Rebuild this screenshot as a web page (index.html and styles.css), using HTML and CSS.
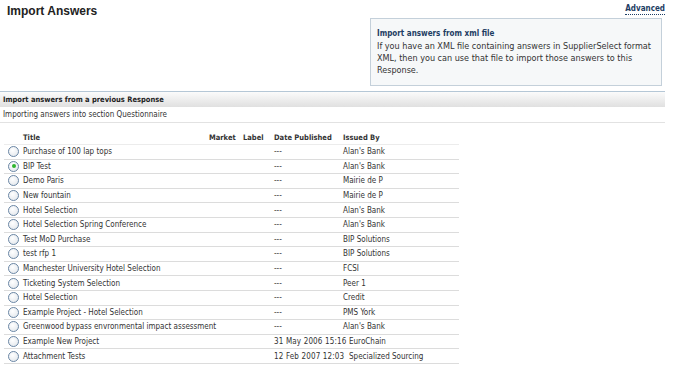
FILE: index.html
```html
<!DOCTYPE html>
<html lang="en">
  <head>
    <meta charset="UTF-8" />
    <title>Import Answers</title>
    <link rel="stylesheet" href="styles.css">
  </head>
  <body>
    <header class="top">
      <h1>Import Answers</h1>
      <div class="side">
        <a class="advanced" href="#">Advanced</a>
        <div class="info">
          <h3>Import answers from xml file</h3>
          <p>
            If you have an XML file containing answers in SupplierSelect format
            XML, then you can use that file to import those answers to this
            Response.
          </p>
        </div>
      </div>
    </header>
    <section class="previous">
      <h2 class="bar">Import answers from a previous Response</h2>
      <p class="note">Importing answers into section Questionnaire</p>
      <table class="responses">
        <colgroup>
          <col class="c-radio" />
          <col class="c-title" />
          <col class="c-market" />
          <col class="c-label" />
          <col class="c-date" />
          <col class="c-issued" />
        </colgroup>
        <thead>
          <tr>
            <th></th>
            <th>Title</th>
            <th>Market</th>
            <th>Label</th>
            <th>Date Published</th>
            <th>Issued By</th>
          </tr>
        </thead>
        <tbody>
          <tr><td><span class="radio"></span></td><td>Purchase of 100 lap tops</td><td></td><td></td><td>---</td><td>Alan's Bank</td></tr>
          <tr><td><span class="radio checked"></span></td><td>BIP Test</td><td></td><td></td><td>---</td><td>Alan's Bank</td></tr>
          <tr><td><span class="radio"></span></td><td>Demo Paris</td><td></td><td></td><td>---</td><td>Mairie de P</td></tr>
          <tr><td><span class="radio"></span></td><td>New fountain</td><td></td><td></td><td>---</td><td>Mairie de P</td></tr>
          <tr><td><span class="radio"></span></td><td>Hotel Selection</td><td></td><td></td><td>---</td><td>Alan's Bank</td></tr>
          <tr><td><span class="radio"></span></td><td>Hotel Selection Spring Conference</td><td></td><td></td><td>---</td><td>Alan's Bank</td></tr>
          <tr><td><span class="radio"></span></td><td>Test MoD Purchase</td><td></td><td></td><td>---</td><td>BIP Solutions</td></tr>
          <tr><td><span class="radio"></span></td><td>test rfp 1</td><td></td><td></td><td>---</td><td>BIP Solutions</td></tr>
          <tr><td><span class="radio"></span></td><td>Manchester University Hotel Selection</td><td></td><td></td><td>---</td><td>FCSI</td></tr>
          <tr><td><span class="radio"></span></td><td>Ticketing System Selection</td><td></td><td></td><td>---</td><td>Peer 1</td></tr>
          <tr><td><span class="radio"></span></td><td>Hotel Selection</td><td></td><td></td><td>---</td><td>Credit</td></tr>
          <tr><td><span class="radio"></span></td><td>Example Project - Hotel Selection</td><td></td><td></td><td>---</td><td>PMS York</td></tr>
          <tr><td><span class="radio"></span></td><td>Greenwood bypass envronmental impact assessment</td><td></td><td></td><td>---</td><td>Alan's Bank</td></tr>
          <tr><td><span class="radio"></span></td><td>Example New Project</td><td></td><td></td><td class="dated">31 May 2006 15:16</td><td class="after-date">EuroChain</td></tr>
          <tr><td><span class="radio"></span></td><td>Attachment Tests</td><td></td><td></td><td class="dated">12 Feb 2007 12:03</td><td class="after-date">Specialized Sourcing</td></tr>
        </tbody>
      </table>
    </section>
  </body>
</html>
```

FILE: styles.css
```css
body {
  margin: 0;
  font-family: "DejaVu Sans Condensed", "Liberation Sans", sans-serif;
  font-size: 8px;
  color: #333333;
  background: #ffffff;
}

.top {
  display: flex;
  justify-content: space-between;
  padding: 4px 8px 0 7px;
  box-sizing: border-box;
  width: 673px;
}

h1 {
  margin: 0;
  font: bold 12px "Liberation Sans", sans-serif;
  color: #222222;
}

.side {
  width: 295px;
  display: flex;
  flex-direction: column;
  align-items: flex-end;
}

.advanced {
  font-size: 8px;
  font-weight: bold;
  color: #1d3d63;
  text-decoration: none;
  border-bottom: 1px dotted #1d3d63;
  line-height: 10px;
}

.info {
  width: 292px;
  margin: 3px 3px 0 0;
  padding: 9px 6px 9px;
  box-sizing: border-box;
  border: 1px solid #c4d0da;
  background: #f6f8f9;
  font-size: 9px;
  line-height: 12px;
}

.info h3 {
  margin: 0;
  font-size: 8px;
  color: #1d3d63;
}

.info p {
  margin: 0;
  color: #333333;
}

.bar {
  margin: 5px 0 0;
  width: 665px;
  height: 16px;
  padding-left: 3px;
  box-sizing: border-box;
  border-top: 1px solid #b5c7d6;
  background: linear-gradient(#fbfbfb, #e0e0e0);
  font-size: 7.5px;
  line-height: 15px;
  color: #222222;
}

.note {
  margin: 0;
  width: 665px;
  padding: 0 3px;
  box-sizing: border-box;
  line-height: 15px;
  border-bottom: 1px solid #e2e2e2;
}

.responses {
  margin: 8px 0 0 4px;
  width: 455px;
  border-collapse: collapse;
  table-layout: fixed;
}

.c-radio { width: 17px; }
.c-title { width: 186px; }
.c-market { width: 34px; }
.c-label { width: 31px; }
.c-date { width: 69px; }
.c-issued { width: 118px; }

.responses th {
  height: 13px;
  padding: 0 0 0 2px;
  text-align: left;
  font-size: 7.5px;
  font-weight: bold;
  white-space: nowrap;
  color: #333333;
  border-bottom: 1px solid #ececec;
}

.responses td {
  height: 13.6px;
  padding: 0 0 0 2px;
  white-space: nowrap;
  border-bottom: 1px solid #dcdcdc;
  color: #333333;
}

.responses td.dated {
  letter-spacing: 0.15px;
}

.responses td.after-date {
  padding-left: 8px;
}

.radio {
  display: block;
  width: 9px;
  height: 9px;
  margin-left: 2px;
  border: 1px solid #6b87a5;
  border-radius: 50%;
  background: radial-gradient(circle at 40% 35%, #ffffff, #dfe4ea);
  position: relative;
}

.radio.checked::after {
  content: "";
  position: absolute;
  left: 2.5px;
  top: 2.5px;
  width: 4px;
  height: 4px;
  border-radius: 50%;
  background: #2fb52f;
}
```
